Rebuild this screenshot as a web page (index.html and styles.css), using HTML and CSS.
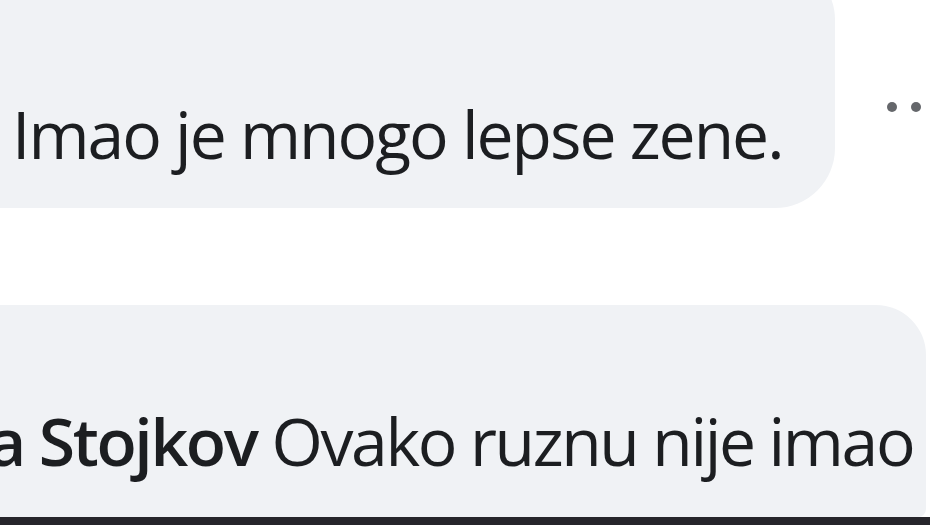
FILE: index.html
```html
<!DOCTYPE html>
<html>
<head>
<meta charset="utf-8">
<link rel="stylesheet" href="styles.css">
</head>
<body>
<div class="page">
  <div class="comment first">
    <div class="bubble b1">
      <p class="text">Imao je mnogo lepse zene.</p>
    </div>
    <div class="more"><span class="dot"></span><span class="dot"></span><span class="dot"></span></div>
  </div>
  <div class="comment second">
    <div class="bubble b2">
      <p class="text"><span class="name">a Stojkov</span> Ovako ruznu nije imao</p>
    </div>
  </div>
  <div class="bar"></div>
</div>
</body>
</html>
```
FILE: styles.css
```css
html, body {
  margin: 0;
  padding: 0;
  background: #ffffff;
}
.page {
  width: 930px;
  height: 525px;
  overflow: hidden;
  display: flex;
  flex-direction: column;
  font-family: "Open Sans", "Noto Sans", sans-serif;
  color: #1c1e21;
}
.comment {
  display: flex;
  align-items: center;
  flex-shrink: 0;
}
.first {
  margin-top: -40px;
  height: 248px;
}
.second {
  margin-top: 97px;
  height: 212px;
}
.bubble {
  background: #f0f2f5;
  display: flex;
  align-items: flex-end;
  box-sizing: border-box;
  flex-shrink: 0;
}
.b1 {
  width: 835px;
  height: 248px;
  border-radius: 0 60px 60px 0;
  padding-bottom: 35px;
  padding-left: 12px;
}
.b2 {
  width: 926px;
  height: 212px;
  border-radius: 0 50px 8px 0;
  padding-bottom: 37px;
}
.text {
  margin: 0;
  font-size: 66px;
  line-height: 80px;
  white-space: nowrap;
  letter-spacing: -2px;
}
.b2 .text {
  margin-left: -12px;
  letter-spacing: -2.35px;
}
.name {
  font-weight: 600;
}
.more {
  display: flex;
  gap: 14px;
  margin-left: 52px;
  margin-top: 46px;
}
.dot {
  width: 10px;
  height: 10px;
  border-radius: 50%;
  background: #65676b;
}
.bar {
  flex: 1;
  background: #26252b;
}
```
